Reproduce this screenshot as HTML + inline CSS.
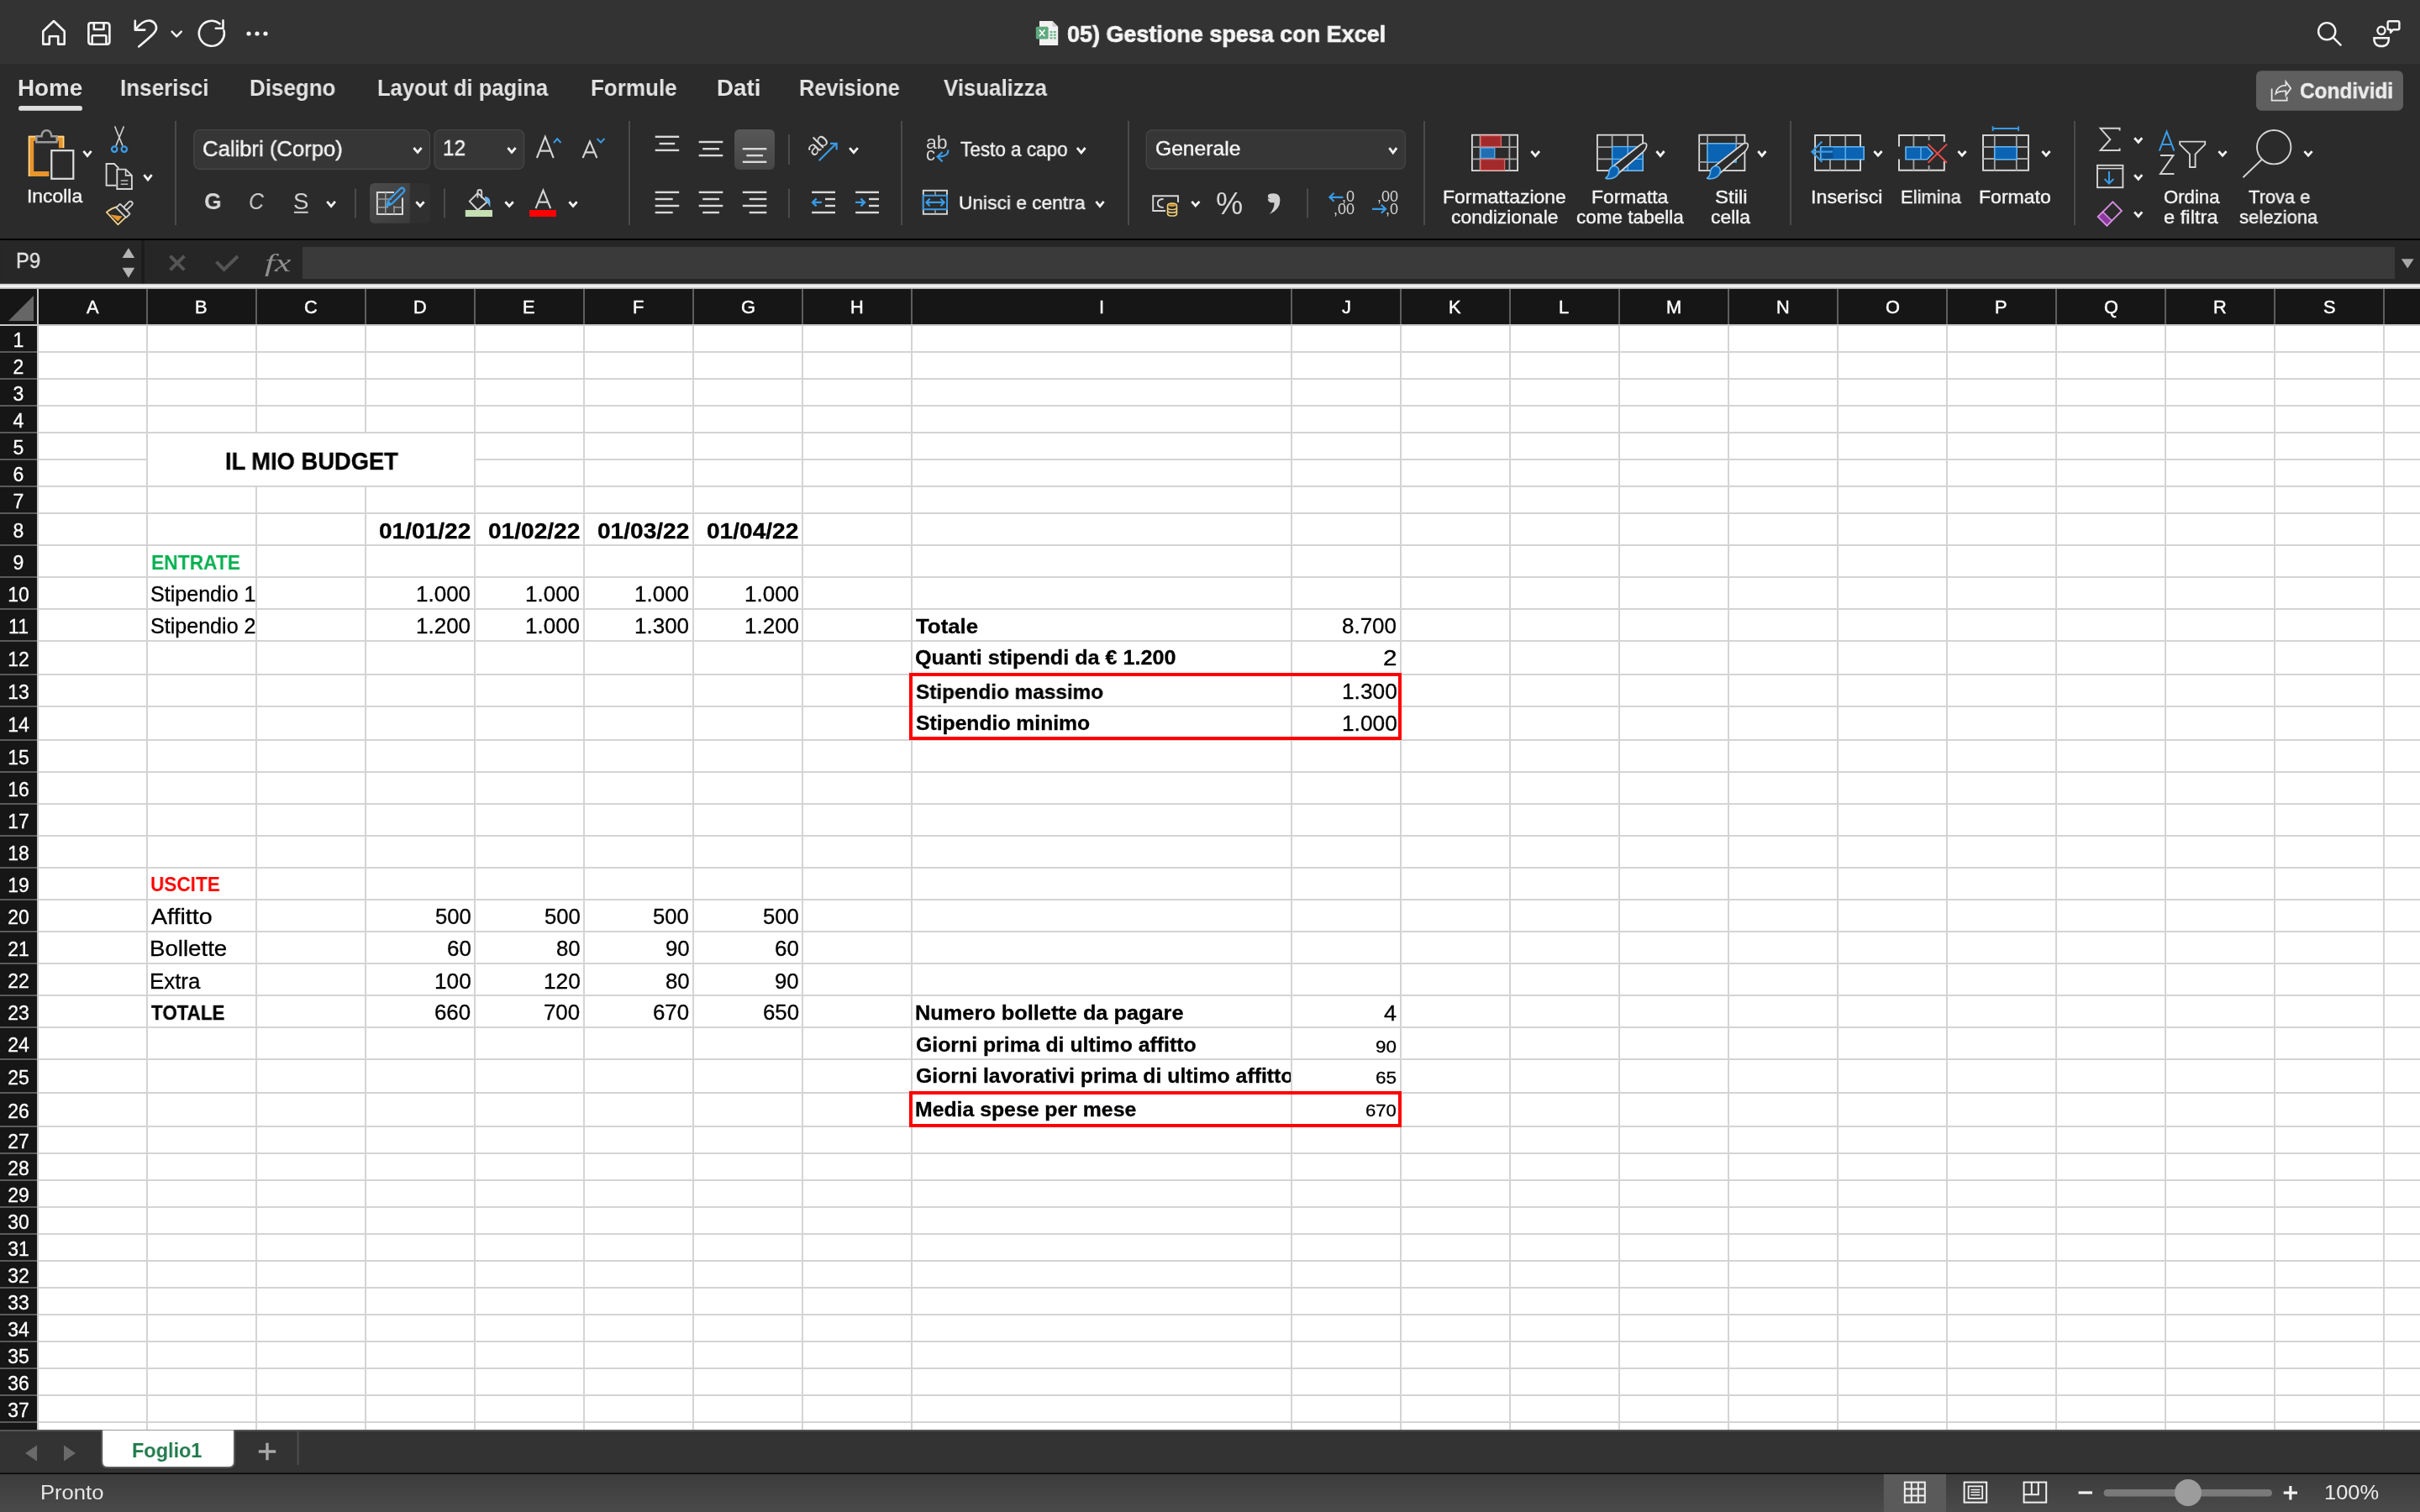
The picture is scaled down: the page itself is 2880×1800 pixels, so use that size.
<!DOCTYPE html>
<html><head><meta charset="utf-8"><style>
html,body{margin:0;padding:0;width:2880px;height:1800px;overflow:hidden;background:#2b2b2b;}
body{position:relative;font-family:"Liberation Sans",sans-serif;}
svg.bg{position:absolute;left:0;top:0;}
.t,.tc{position:absolute;white-space:nowrap;transform-origin:0 0;will-change:transform;}
.tc{-webkit-text-stroke:0.45px #fff;}
.t[style*="color:#f2f2f2;"],.t[style*="color:#f4f4f4;"],.t[style*="color:#e4e4e4;"],.t[style*="color:#e6e6e6;"],.t[style*="color:#ececec;"]{-webkit-text-stroke:0.4px currentColor;}
.t[style*="color:#000;"]{-webkit-text-stroke:0.3px #000;}
.t[style*="color:#f5f5f5;"]{-webkit-text-stroke:0.7px #f5f5f5;}
.rn{position:absolute;will-change:transform;left:0;width:44px;text-align:center;color:#fff;font-size:23px;-webkit-text-stroke:0.3px #fff;font-family:"Liberation Sans",sans-serif;}
</style></head><body>
<svg class="bg" width="2880" height="1800" viewBox="0 0 2880 1800"><rect x="0" y="0" width="2880" height="76" fill="#333333" />
<rect x="0" y="76" width="2880" height="208" fill="#2b2b2b" />
<rect x="0" y="284" width="2880" height="2" fill="#000000" />
<rect x="0" y="286" width="2880" height="52" fill="#262626" />
<rect x="2" y="288" width="166" height="49" fill="#272727" />
<rect x="168" y="286" width="4" height="52" fill="#1d1d1d" />
<defs><linearGradient id="wb" x1="0" y1="0" x2="0" y2="1"><stop offset="0" stop-color="#c4c4c4"/><stop offset="0.5" stop-color="#ffffff"/><stop offset="1" stop-color="#a8a8a8"/></linearGradient></defs>
<rect x="0" y="337.8" width="2880" height="6.2" fill="url(#wb)" />
<rect x="0" y="344" width="2880" height="1358" fill="#ffffff" />
<rect x="0" y="344" width="2880" height="42" fill="#161616" />
<rect x="0" y="344" width="44" height="1358" fill="#161616" />
<rect x="0" y="386" width="2880" height="2" fill="#c8c8c8" />
<rect x="44" y="344" width="2" height="1358" fill="#c8c8c8" />
<polygon points="40,352 40,382 10,382" fill="#666"/>
<rect x="46" y="418" width="2834" height="2" fill="#d4d4d4" />
<rect x="0" y="418" width="44" height="2" fill="#5a5a5a" />
<rect x="46" y="450" width="2834" height="2" fill="#d4d4d4" />
<rect x="0" y="450" width="44" height="2" fill="#5a5a5a" />
<rect x="46" y="482" width="2834" height="2" fill="#d4d4d4" />
<rect x="0" y="482" width="44" height="2" fill="#5a5a5a" />
<rect x="46" y="514" width="2834" height="2" fill="#d4d4d4" />
<rect x="0" y="514" width="44" height="2" fill="#5a5a5a" />
<rect x="46" y="546" width="128" height="2" fill="#d4d4d4" />
<rect x="565" y="546" width="2315" height="2" fill="#d4d4d4" />
<rect x="0" y="546" width="44" height="2" fill="#5a5a5a" />
<rect x="46" y="578" width="2834" height="2" fill="#d4d4d4" />
<rect x="0" y="578" width="44" height="2" fill="#5a5a5a" />
<rect x="46" y="610" width="2834" height="2" fill="#d4d4d4" />
<rect x="0" y="610" width="44" height="2" fill="#5a5a5a" />
<rect x="46" y="648" width="2834" height="2" fill="#d4d4d4" />
<rect x="0" y="648" width="44" height="2" fill="#5a5a5a" />
<rect x="46" y="686" width="2834" height="2" fill="#d4d4d4" />
<rect x="0" y="686" width="44" height="2" fill="#5a5a5a" />
<rect x="46" y="724" width="2834" height="2" fill="#d4d4d4" />
<rect x="0" y="724" width="44" height="2" fill="#5a5a5a" />
<rect x="46" y="762" width="2834" height="2" fill="#d4d4d4" />
<rect x="0" y="762" width="44" height="2" fill="#5a5a5a" />
<rect x="46" y="802" width="2834" height="2" fill="#d4d4d4" />
<rect x="0" y="802" width="44" height="2" fill="#5a5a5a" />
<rect x="46" y="840" width="2834" height="2" fill="#d4d4d4" />
<rect x="0" y="840" width="44" height="2" fill="#5a5a5a" />
<rect x="46" y="880" width="2834" height="2" fill="#d4d4d4" />
<rect x="0" y="880" width="44" height="2" fill="#5a5a5a" />
<rect x="46" y="918" width="2834" height="2" fill="#d4d4d4" />
<rect x="0" y="918" width="44" height="2" fill="#5a5a5a" />
<rect x="46" y="956" width="2834" height="2" fill="#d4d4d4" />
<rect x="0" y="956" width="44" height="2" fill="#5a5a5a" />
<rect x="46" y="994" width="2834" height="2" fill="#d4d4d4" />
<rect x="0" y="994" width="44" height="2" fill="#5a5a5a" />
<rect x="46" y="1032" width="2834" height="2" fill="#d4d4d4" />
<rect x="0" y="1032" width="44" height="2" fill="#5a5a5a" />
<rect x="46" y="1070" width="2834" height="2" fill="#d4d4d4" />
<rect x="0" y="1070" width="44" height="2" fill="#5a5a5a" />
<rect x="46" y="1108" width="2834" height="2" fill="#d4d4d4" />
<rect x="0" y="1108" width="44" height="2" fill="#5a5a5a" />
<rect x="46" y="1146" width="2834" height="2" fill="#d4d4d4" />
<rect x="0" y="1146" width="44" height="2" fill="#5a5a5a" />
<rect x="46" y="1184" width="2834" height="2" fill="#d4d4d4" />
<rect x="0" y="1184" width="44" height="2" fill="#5a5a5a" />
<rect x="46" y="1222" width="2834" height="2" fill="#d4d4d4" />
<rect x="0" y="1222" width="44" height="2" fill="#5a5a5a" />
<rect x="46" y="1260" width="2834" height="2" fill="#d4d4d4" />
<rect x="0" y="1260" width="44" height="2" fill="#5a5a5a" />
<rect x="46" y="1300" width="2834" height="2" fill="#d4d4d4" />
<rect x="0" y="1300" width="44" height="2" fill="#5a5a5a" />
<rect x="46" y="1340" width="2834" height="2" fill="#d4d4d4" />
<rect x="0" y="1340" width="44" height="2" fill="#5a5a5a" />
<rect x="46" y="1372" width="2834" height="2" fill="#d4d4d4" />
<rect x="0" y="1372" width="44" height="2" fill="#5a5a5a" />
<rect x="46" y="1404" width="2834" height="2" fill="#d4d4d4" />
<rect x="0" y="1404" width="44" height="2" fill="#5a5a5a" />
<rect x="46" y="1436" width="2834" height="2" fill="#d4d4d4" />
<rect x="0" y="1436" width="44" height="2" fill="#5a5a5a" />
<rect x="46" y="1468" width="2834" height="2" fill="#d4d4d4" />
<rect x="0" y="1468" width="44" height="2" fill="#5a5a5a" />
<rect x="46" y="1500" width="2834" height="2" fill="#d4d4d4" />
<rect x="0" y="1500" width="44" height="2" fill="#5a5a5a" />
<rect x="46" y="1532" width="2834" height="2" fill="#d4d4d4" />
<rect x="0" y="1532" width="44" height="2" fill="#5a5a5a" />
<rect x="46" y="1564" width="2834" height="2" fill="#d4d4d4" />
<rect x="0" y="1564" width="44" height="2" fill="#5a5a5a" />
<rect x="46" y="1596" width="2834" height="2" fill="#d4d4d4" />
<rect x="0" y="1596" width="44" height="2" fill="#5a5a5a" />
<rect x="46" y="1628" width="2834" height="2" fill="#d4d4d4" />
<rect x="0" y="1628" width="44" height="2" fill="#5a5a5a" />
<rect x="46" y="1660" width="2834" height="2" fill="#d4d4d4" />
<rect x="0" y="1660" width="44" height="2" fill="#5a5a5a" />
<rect x="46" y="1692" width="2834" height="2" fill="#d4d4d4" />
<rect x="0" y="1692" width="44" height="2" fill="#5a5a5a" />
<rect x="174" y="388" width="2" height="1314" fill="#d4d4d4" />
<rect x="174" y="344" width="2" height="42" fill="#5e5e5e" />
<rect x="304" y="388" width="2" height="127" fill="#d4d4d4" />
<rect x="304" y="579" width="2" height="1123" fill="#d4d4d4" />
<rect x="304" y="344" width="2" height="42" fill="#5e5e5e" />
<rect x="434" y="388" width="2" height="127" fill="#d4d4d4" />
<rect x="434" y="579" width="2" height="1123" fill="#d4d4d4" />
<rect x="434" y="344" width="2" height="42" fill="#5e5e5e" />
<rect x="564" y="388" width="2" height="1314" fill="#d4d4d4" />
<rect x="564" y="344" width="2" height="42" fill="#5e5e5e" />
<rect x="694" y="388" width="2" height="1314" fill="#d4d4d4" />
<rect x="694" y="344" width="2" height="42" fill="#5e5e5e" />
<rect x="824" y="388" width="2" height="1314" fill="#d4d4d4" />
<rect x="824" y="344" width="2" height="42" fill="#5e5e5e" />
<rect x="954" y="388" width="2" height="1314" fill="#d4d4d4" />
<rect x="954" y="344" width="2" height="42" fill="#5e5e5e" />
<rect x="1084" y="388" width="2" height="1314" fill="#d4d4d4" />
<rect x="1084" y="344" width="2" height="42" fill="#5e5e5e" />
<rect x="1536" y="388" width="2" height="1314" fill="#d4d4d4" />
<rect x="1536" y="344" width="2" height="42" fill="#5e5e5e" />
<rect x="1666" y="388" width="2" height="1314" fill="#d4d4d4" />
<rect x="1666" y="344" width="2" height="42" fill="#5e5e5e" />
<rect x="1796" y="388" width="2" height="1314" fill="#d4d4d4" />
<rect x="1796" y="344" width="2" height="42" fill="#5e5e5e" />
<rect x="1926" y="388" width="2" height="1314" fill="#d4d4d4" />
<rect x="1926" y="344" width="2" height="42" fill="#5e5e5e" />
<rect x="2056" y="388" width="2" height="1314" fill="#d4d4d4" />
<rect x="2056" y="344" width="2" height="42" fill="#5e5e5e" />
<rect x="2186" y="388" width="2" height="1314" fill="#d4d4d4" />
<rect x="2186" y="344" width="2" height="42" fill="#5e5e5e" />
<rect x="2316" y="388" width="2" height="1314" fill="#d4d4d4" />
<rect x="2316" y="344" width="2" height="42" fill="#5e5e5e" />
<rect x="2446" y="388" width="2" height="1314" fill="#d4d4d4" />
<rect x="2446" y="344" width="2" height="42" fill="#5e5e5e" />
<rect x="2576" y="388" width="2" height="1314" fill="#d4d4d4" />
<rect x="2576" y="344" width="2" height="42" fill="#5e5e5e" />
<rect x="2706" y="388" width="2" height="1314" fill="#d4d4d4" />
<rect x="2706" y="344" width="2" height="42" fill="#5e5e5e" />
<rect x="2836" y="388" width="2" height="1314" fill="#d4d4d4" />
<rect x="2836" y="344" width="2" height="42" fill="#5e5e5e" />
<rect x="1084" y="803" width="582" height="76" fill="none" stroke="#ff0000" stroke-width="4"/>
<rect x="1084" y="1301" width="582" height="39" fill="none" stroke="#ff0000" stroke-width="4"/>
<rect x="0" y="1702" width="2880" height="51" fill="#333333" />
<rect x="0" y="1753.6" width="2880" height="1.6" fill="#050505" />
<defs><linearGradient id="sg" x1="0" y1="0" x2="0" y2="1"><stop offset="0" stop-color="#3c3c3c"/><stop offset="1" stop-color="#4a4a4a"/></linearGradient></defs>
<rect x="0" y="1755" width="2880" height="45" fill="url(#sg)" />
<g fill="none" stroke="#f4f4f4" stroke-width="2.6" stroke-linejoin="round" stroke-linecap="round">
<path d="M51.3,52.6 V37.2 L64,25 L76.7,37.2 V52.6 H69.2 V43.2 H58.8 V52.6 Z"/>
<path d="M108,27.3 H127 Q130.4,27.3 130.4,30.7 V49.6 Q130.4,52.7 127.3,52.7 H108.5 Q105.4,52.7 105.4,49.6 V30.2 Q105.4,27.3 108,27.3 Z"/>
<path d="M111.8,27.3 V35 H123.5 V27.3"/>
<path d="M109.7,52.7 V43.2 Q109.7,42.3 110.6,42.3 H125.5 Q126.4,42.3 126.4,43.2 V52.7"/>
<path d="M160.8,24.8 V35.6 H172.3"/>
<path d="M161.2,35.2 C167,27.8 173,23.6 178.5,24.6 C184,25.6 187.2,30.8 185.6,35.6 C184.6,38.6 181.8,41.6 165.2,55.4"/>
<path d="M204.6,37.6 L210.2,43.4 L215.8,37.6" stroke-width="2.4"/>
<path d="M266.4,36.2 A15,15 0 1 1 261.5,28.3"/>
<path d="M265.5,24.4 V33.8 H256.8"/>
</g>
<g fill="#f4f4f4"><circle cx="296" cy="40" r="2.6"/><circle cx="306" cy="40" r="2.6"/><circle cx="316" cy="40" r="2.6"/></g>
<path d="M1237,25 H1252.5 L1259.2,31.7 V54 H1237 Z" fill="#f2f2f2"/>
<path d="M1252.5,25 V31.7 H1259.2" fill="#cfcfcf"/>
<g fill="#6bb58a"><rect x="1249.5" y="37" width="3" height="2.2"/><rect x="1253.8" y="37" width="3" height="2.2"/><rect x="1249.5" y="40.6" width="3" height="2.2"/><rect x="1253.8" y="40.6" width="3" height="2.2"/><rect x="1249.5" y="44.2" width="3" height="2.2"/><rect x="1253.8" y="44.2" width="3" height="2.2"/></g>
<rect x="1232.8" y="31.8" width="14.8" height="14.8" rx="1.5" fill="#5fa97e"/>
<path d="M1237,35.4 L1243.4,43 M1243.4,35.4 L1237,43" stroke="#fff" stroke-width="1.6"/>
<g fill="none" stroke="#f4f4f4" stroke-width="2.4" stroke-linecap="round">
<circle cx="2769.2" cy="37.2" r="10.1"/><path d="M2776.6,44.6 L2785.6,53.6"/>
<circle cx="2834" cy="36.3" r="4.6"/>
<path d="M2825.4,45.3 H2842.8 Q2843.2,55 2834.1,55 Q2825,55 2825.4,45.3 Z"/>
<path d="M2843.4,25.2 H2853.6 Q2855.4,25.2 2855.4,27 V33.4 Q2855.4,35.2 2853.6,35.2 H2848 L2845,38.8 V35.2 H2843.4 Q2841.6,35.2 2841.6,33.4 V27 Q2841.6,25.2 2843.4,25.2 Z" stroke-linejoin="round"/>
</g>
<rect x="22" y="126" width="76" height="5.8" rx="2.9" fill="#dedede"/>
<rect x="2685" y="84.2" width="175" height="47.5" rx="6.5" fill="#5f5f5f"/>
<g fill="none" stroke="#e6e6e6" stroke-width="1.8" stroke-linejoin="miter">
<path d="M2703.6,105.6 V119.6 H2721.6 V115.2"/>
<path d="M2708.4,111.4 C2709.5,104.5 2714.5,101.6 2720.4,101.6 V97.2 L2726.2,105.2 L2720.4,113.2 V108.4 C2715.2,108.2 2711,109.2 2708.4,111.4 Z"/>
</g>
<polygon points="152.9,295.2 160.2,307 145.6,307" fill="#b4b4b4"/>
<polygon points="145.6,318.8 160.2,318.8 152.9,330.8" fill="#b4b4b4"/>
<path d="M202.5,304.8 L219.4,321.4 M219.4,304.8 L202.5,321.4" stroke="#555555" stroke-width="4" stroke-linecap="butt"/>
<path d="M257.5,311.6 L266.6,321 L283,305" fill="none" stroke="#555555" stroke-width="4"/>
<rect x="360" y="294" width="2490" height="38" fill="#3a3a3a"/>
<polygon points="2857.8,308.2 2872.6,308.2 2865.2,319.4" fill="#a8a8a8"/>
<rect x="208" y="144" width="2" height="124" fill="#4b4b4b" />
<rect x="748" y="144" width="2" height="124" fill="#4b4b4b" />
<rect x="1072" y="144" width="2" height="124" fill="#4b4b4b" />
<rect x="1342" y="144" width="2" height="124" fill="#4b4b4b" />
<rect x="1694" y="144" width="2" height="124" fill="#4b4b4b" />
<rect x="2130" y="144" width="2" height="124" fill="#4b4b4b" />
<rect x="2468" y="144" width="2" height="124" fill="#4b4b4b" />
<rect x="422" y="224.5" width="2" height="35" fill="#4b4b4b" />
<rect x="528" y="224.5" width="2" height="35" fill="#4b4b4b" />
<rect x="938" y="160" width="2" height="36" fill="#4b4b4b" />
<rect x="938" y="224.5" width="2" height="35" fill="#4b4b4b" />
<rect x="1555" y="224.5" width="2" height="35" fill="#4b4b4b" />
<path d="M33.8,161.8 H42.6 V167.8 H40.2 V203.9 H58.4 V210 H33.8 Z" fill="#e8952c"/>
<path d="M68,161.8 H76.3 V176.2 H69.9 V167.8 H68 Z" fill="#e8952c"/>
<path d="M34.6,210 V162.6 H42.6 M69,162.6 H75.5 V176" fill="none" stroke="#fbd98f" stroke-width="1.6"/>
<path d="M43.3,169.2 V162.3 H49.6 Q50,155.3 55.4,155.3 Q60.8,155.3 61.2,162.3 H67.6 V169.2 Z" fill="#2b2b2b" stroke="#9c9c9c" stroke-width="2.4"/>
<rect x="61.3" y="179.2" width="26" height="33.6" fill="#2b2b2b" stroke="#dedede" stroke-width="2.2"/>
<path d="M99.4,179.9 L104.0,185.6 L108.6,179.9" fill="none" stroke="#f4f4f4" stroke-width="2.8" stroke-linecap="butt" stroke-linejoin="miter"/>
<path d="M136.6,150.4 L146,173.6 M147.4,150.4 L138,173.6" fill="none" stroke="#cfcfcf" stroke-width="1.6"/>
<circle cx="136.2" cy="177.6" r="3.2" fill="none" stroke="#3a9be6" stroke-width="2.3"/><circle cx="147.8" cy="177.6" r="3.2" fill="none" stroke="#3a9be6" stroke-width="2.3"/>
<path d="M138.2,220.8 H126.6 V195 H136 L140.6,199.6 V201.5" fill="none" stroke="#d6d6d6" stroke-width="1.9"/>
<path d="M139.3,201.6 H149.6 L156.9,208.9 V225 H139.3 Z" fill="#2b2b2b" stroke="#d6d6d6" stroke-width="1.9"/>
<path d="M149.6,201.6 V208.9 H156.9" fill="none" stroke="#d6d6d6" stroke-width="1.6"/>
<path d="M143.7,215 H152.3 M143.7,219.3 H152.3" stroke="#bdbdbd" stroke-width="1.6"/>
<path d="M171.4,208.1 L176.0,214.0 L180.6,208.1" fill="none" stroke="#f4f4f4" stroke-width="2.8" stroke-linecap="butt" stroke-linejoin="miter"/>
<path d="M126.8,252.6 Q133,247.6 139.6,246.2 L150.8,257.4 L140.4,267.4 Z" fill="#2b2b2b" stroke="#f6d48e" stroke-width="1.7" stroke-linejoin="round"/>
<path d="M131.2,255.6 L145.6,257.4 L140.4,263.6 Z" fill="#e8952c"/>
<g transform="rotate(45 146.6 250.8)"><rect x="138.2" y="247.6" width="16.8" height="6.6" rx="1" fill="#2b2b2b" stroke="#d4d4d4" stroke-width="1.8"/><rect x="144.1" y="236.2" width="5" height="11.6" rx="2.5" fill="#2b2b2b" stroke="#d4d4d4" stroke-width="1.8"/></g>
<rect x="230.8" y="154.6" width="280.6" height="46.6" rx="7" fill="#363636" stroke="#444444" stroke-width="1.4"/>
<rect x="517.2" y="154.6" width="106.4" height="46.6" rx="7" fill="#363636" stroke="#444444" stroke-width="1.4"/>
<path d="M492.4,176.0 L497.0,181.4 L501.6,176.0" fill="none" stroke="#f4f4f4" stroke-width="2.8" stroke-linecap="butt" stroke-linejoin="miter"/>
<path d="M604.4,176.0 L609.0,181.4 L613.6,176.0" fill="none" stroke="#f4f4f4" stroke-width="2.8" stroke-linecap="butt" stroke-linejoin="miter"/>
<path d="M638.9,188 L648.8,162.8 L658.7,188 M642.6,179.6 H655" fill="none" stroke="#d4d4d4" stroke-width="2.1"/>
<path d="M658.9,170 L663.2,165.3 L667.5,170" fill="none" stroke="#3a9be6" stroke-width="2"/>
<path d="M693.6,188 L702,168.4 L710.4,188 M696.8,181.4 H707.2" fill="none" stroke="#d4d4d4" stroke-width="2.1"/>
<path d="M710.6,165 L715,169.6 L719.4,165" fill="none" stroke="#3a9be6" stroke-width="2"/>
<rect x="350" y="251.8" width="16.6" height="2" fill="#d0d0d0" />
<path d="M389.2,239.8 L394.1,245.6 L398.9,239.8" fill="none" stroke="#f4f4f4" stroke-width="2.8" stroke-linecap="butt" stroke-linejoin="miter"/>
<defs><linearGradient id="bb" x1="0" y1="0" x2="1" y2="1"><stop offset="0" stop-color="#4b4b4b"/><stop offset="1" stop-color="#3c3c3c"/></linearGradient></defs>
<path d="M446,218 H506 Q512,218 512,224 V259.8 Q512,265.8 506,265.8 H446 Q440,265.8 440,259.8 V224 Q440,218 446,218 Z" fill="#303030"/>
<path d="M446,218 H487.8 V265.8 H446 Q440,265.8 440,259.8 V224 Q440,218 446,218 Z" fill="url(#bb)"/>
<path d="M469,228.9 H448.9 V255 H479 V235.4" fill="none" stroke="#d8d8d8" stroke-width="2"/>
<path d="M458.8,229 V255 M469,245 V255 M449,237 H466 M449,246.8 H462 M469,246.8 H479" fill="none" stroke="#9a9a9a" stroke-width="1.6"/>
<path d="M460.2,245.6 L462.2,238.8 L476.4,224.6 Q478.4,222.6 480.4,224.6 Q482.4,226.6 480.4,228.6 L466.2,242.8 Z" fill="none" stroke="#3a9be6" stroke-width="2.2" stroke-linejoin="round"/>
<path d="M460.2,245.6 L462.2,238.8 L466.2,242.8 Z" fill="#3a9be6"/>
<path d="M495.4,240.2 L500.0,245.4 L504.6,240.2" fill="none" stroke="#f4f4f4" stroke-width="2.8" stroke-linecap="butt" stroke-linejoin="miter"/>
<path d="M558.8,239.6 L568.6,229.8 L579.6,240.4 L568.6,250 Z" fill="none" stroke="#d4d4d4" stroke-width="2"/>
<path d="M568.4,235.6 V228.4 Q568.4,226 570.8,226 Q573.2,226 573.2,228.4 V236" fill="none" stroke="#d4d4d4" stroke-width="1.8"/>
<path d="M577,234 Q582.8,234.6 583.4,240 V247 Q580.6,242 577,237.6 Z" fill="#6ab3e8"/>
<rect x="553.8" y="250" width="32.2" height="8" fill="#c5dfb3" />
<path d="M601.4,240.2 L606.1,245.4 L610.8,240.2" fill="none" stroke="#f4f4f4" stroke-width="2.8" stroke-linecap="butt" stroke-linejoin="miter"/>
<path d="M637.6,248.2 L646.4,226.6 L655.2,248.2 M640.6,240.6 H652.2" fill="none" stroke="#d4d4d4" stroke-width="2.1"/>
<rect x="630" y="250" width="32" height="8" fill="#ff0000" />
<path d="M677.4,240.2 L682.0,245.4 L686.6,240.2" fill="none" stroke="#f4f4f4" stroke-width="2.8" stroke-linecap="butt" stroke-linejoin="miter"/>
<rect x="779.7" y="161.6" width="28.5" height="2.4" fill="#d9d9d9" />
<rect x="784.6" y="169.8" width="18.6" height="2.4" fill="#d9d9d9" />
<rect x="779.7" y="177.7" width="28.5" height="2.4" fill="#d9d9d9" />
<rect x="831.7" y="167.8" width="28.6" height="2.4" fill="#d9d9d9" />
<rect x="836.2" y="176" width="19.8" height="2.4" fill="#d9d9d9" />
<rect x="831.7" y="183.9" width="28.6" height="2.4" fill="#d9d9d9" />
<defs><linearGradient id="sel" x1="0" y1="0" x2="0" y2="1"><stop offset="0" stop-color="#575757"/><stop offset="1" stop-color="#464646"/></linearGradient></defs>
<rect x="874" y="154" width="48" height="48" rx="6" fill="url(#sel)"/>
<rect x="883.8" y="176" width="28.5" height="2.4" fill="#d9d9d9" />
<rect x="888.3" y="183.9" width="19.7" height="2.4" fill="#d9d9d9" />
<rect x="883.8" y="191.6" width="28.5" height="2.4" fill="#d9d9d9" />
<path d="M974.7,191.2 L995.2,170.8 M988,170.8 H995.6 V178.2" fill="none" stroke="#3a9be6" stroke-width="2.2"/>
<path d="M1011.1,176.1 L1016.0,181.6 L1020.8,176.1" fill="none" stroke="#f4f4f4" stroke-width="2.8" stroke-linecap="butt" stroke-linejoin="miter"/>
<rect x="779.7" y="227.7" width="28.5" height="2.4" fill="#d9d9d9" />
<rect x="779.7" y="235.8" width="21" height="2.4" fill="#d9d9d9" />
<rect x="779.7" y="243.8" width="28.5" height="2.4" fill="#d9d9d9" />
<rect x="779.7" y="251.8" width="21" height="2.4" fill="#d9d9d9" />
<rect x="831.7" y="227.7" width="28.6" height="2.4" fill="#d9d9d9" />
<rect x="836.2" y="235.8" width="19.8" height="2.4" fill="#d9d9d9" />
<rect x="831.7" y="243.8" width="28.6" height="2.4" fill="#d9d9d9" />
<rect x="836.2" y="251.8" width="19.8" height="2.4" fill="#d9d9d9" />
<rect x="883.8" y="227.7" width="28.5" height="2.4" fill="#d9d9d9" />
<rect x="891.7" y="235.8" width="20.6" height="2.4" fill="#d9d9d9" />
<rect x="883.8" y="243.8" width="28.5" height="2.4" fill="#d9d9d9" />
<rect x="891.7" y="251.8" width="20.6" height="2.4" fill="#d9d9d9" />
<rect x="966.1" y="227.7" width="27.9" height="2.4" fill="#d9d9d9" />
<rect x="982" y="235.8" width="12" height="2.4" fill="#d9d9d9" />
<rect x="982" y="243.8" width="12" height="2.4" fill="#d9d9d9" />
<rect x="966.1" y="251.8" width="27.9" height="2.4" fill="#d9d9d9" />
<path d="M977.9,240.9 H967.4 M971.6,236.4 L967,240.9 L971.6,245.4" fill="none" stroke="#3a9be6" stroke-width="2.3"/>
<rect x="1018.1" y="227.7" width="27.9" height="2.4" fill="#d9d9d9" />
<rect x="1034" y="235.8" width="12" height="2.4" fill="#d9d9d9" />
<rect x="1034" y="243.8" width="12" height="2.4" fill="#d9d9d9" />
<rect x="1018.1" y="251.8" width="27.9" height="2.4" fill="#d9d9d9" />
<path d="M1018,240.9 H1028.6 M1024.4,236.4 L1029,240.9 L1024.4,245.4" fill="none" stroke="#3a9be6" stroke-width="2.3"/>
<path d="M1128.2,178.4 Q1129.6,186.2 1116,186.6 M1121.6,181 L1115.6,186.6 L1121.6,192.4" fill="none" stroke="#3a9be6" stroke-width="2.2"/>
<path d="M1281.9,176.0 L1286.8,181.8 L1291.6,176.0" fill="none" stroke="#f4f4f4" stroke-width="2.8" stroke-linecap="butt" stroke-linejoin="miter"/>
<rect x="1098.8" y="226.8" width="28.2" height="28" fill="none" stroke="#d8d8d8" stroke-width="1.9"/>
<path d="M1113,227.5 V232 M1113,249.6 V254.4" stroke="#a0a0a0" stroke-width="1.6"/>
<rect x="1098.8" y="232.8" width="28.2" height="16.4" fill="#2b2b2b" stroke="#3a9be6" stroke-width="2"/>
<path d="M1102.4,240.9 H1123.6 M1106.6,236.6 L1102.4,240.9 L1106.6,245.2 M1119.4,236.6 L1123.6,240.9 L1119.4,245.2" fill="none" stroke="#3a9be6" stroke-width="2.2"/>
<path d="M1304.4,239.9 L1309.0,245.6 L1313.6,239.9" fill="none" stroke="#f4f4f4" stroke-width="2.8" stroke-linecap="butt" stroke-linejoin="miter"/>
<rect x="1364.2" y="155" width="308.2" height="46" rx="7" fill="#363636" stroke="#444444" stroke-width="1.4"/>
<path d="M1653.4,176.1 L1657.8,182.0 L1662.1,176.1" fill="none" stroke="#f4f4f4" stroke-width="2.8" stroke-linecap="butt" stroke-linejoin="miter"/>
<path d="M1387,251 H1372.2 V233.2 H1402 V241" fill="none" stroke="#d6d6d6" stroke-width="1.9"/>
<path d="M1384.6,237 Q1377.8,237 1377.8,242 Q1377.8,247 1384.6,247" fill="none" stroke="#d6d6d6" stroke-width="1.9"/>
<path d="M1389.6,245 Q1389.6,242.2 1395,242.2 Q1400.4,242.2 1400.4,245 V254.4 Q1400.4,257 1395,257 Q1389.6,257 1389.6,254.4 Z" fill="#2b2b2b" stroke="#f0cf7a" stroke-width="1.7"/>
<path d="M1389.6,248.4 Q1395,250.8 1400.4,248.4 M1389.6,252 Q1395,254.4 1400.4,252" fill="none" stroke="#f0cf7a" stroke-width="1.4"/>
<ellipse cx="1395" cy="244.6" rx="4.2" ry="1.3" fill="#e09a2a"/>
<path d="M1418.3,239.9 L1422.8,245.0 L1427.4,239.9" fill="none" stroke="#f4f4f4" stroke-width="2.8" stroke-linecap="butt" stroke-linejoin="miter"/>
<path d="M1512.6,236.6 Q1508.8,236.6 1508.8,233.6 Q1508.8,230.2 1515.6,230.2 Q1523.4,230.2 1523.4,238.4 Q1523.4,249.2 1510.6,255 Q1517,248.4 1516.4,241 Q1514.6,241.6 1512.6,241.2 Q1508.8,240.4 1508.8,236.6 Z" fill="#d0d0d0"/>
<path d="M1598.4,234.8 H1582.4 M1587.6,229.8 L1582.4,234.8 L1587.6,239.8" fill="none" stroke="#3a9be6" stroke-width="2.2"/>
<path d="M1633,248.8 H1649 M1643.8,243.8 L1649,248.8 L1643.8,253.8" fill="none" stroke="#3a9be6" stroke-width="2.2"/>
<rect x="1751.9" y="160.7" width="54.2" height="42.4" fill="none" stroke="#dcdcdc" stroke-width="1.8"/>
<path d="M1752,175.1 H1806 M1752,189.3 H1806 M1761.6,161 V203 M1796.4,161 V203" stroke="#a8a8a8" stroke-width="1.8"/>
<rect x="1762" y="161.6" width="24.4" height="13" fill="#a32a2a" stroke="#e06565" stroke-width="1.3"/>
<rect x="1762" y="176" width="16.8" height="12.4" fill="#1f6fb2" stroke="#5ab0e8" stroke-width="1.3"/>
<rect x="1762" y="189.6" width="28.6" height="13" fill="#a32a2a" stroke="#e06565" stroke-width="1.3"/>
<path d="M1822.4,180.0 L1827.2,185.6 L1832.0,180.0" fill="none" stroke="#f4f4f4" stroke-width="2.8" stroke-linecap="butt" stroke-linejoin="miter"/>
<rect x="1900.9" y="160.7" width="54.2" height="42.4" fill="none" stroke="#dcdcdc" stroke-width="1.8"/>
<path d="M1901,175.1 H1918 M1901,189.3 H1918 M1918.6,161 V175 M1937.2,161 V175" stroke="#a8a8a8" stroke-width="1.8"/>
<rect x="1918.6" y="174.6" width="36.5" height="28.5" fill="#0b63b3" stroke="#63b5ee" stroke-width="1.4"/>
<path d="M1918.6,189.3 H1955 M1937.2,175 V203" stroke="#63b5ee" stroke-width="1.3"/>
<g transform="translate(0,0)">
<path d="M1917.6,199.6 L1952.6,172 Q1958.8,168.6 1959.6,172.4 Q1960,176 1955.6,180.6 L1925.6,206.8 Z" fill="#2b2b2b" stroke="#d8d8d8" stroke-width="1.8" stroke-linejoin="round"/>
<path d="M1914.6,212.8 Q1921.6,212.4 1925,208.2 Q1928.4,202.8 1925,199.2 Q1921,196.2 1917.2,199.4 Q1914.6,202 1914.6,206.6 Q1914,210 1911,212 Q1912.6,213.2 1914.6,212.8 Z" fill="#0b63b3" stroke="#63b5ee" stroke-width="1.6"/>
</g>
<path d="M1971.4,180.0 L1976.0,185.6 L1980.6,180.0" fill="none" stroke="#f4f4f4" stroke-width="2.8" stroke-linecap="butt" stroke-linejoin="miter"/>
<rect x="2022.2" y="160.7" width="54.2" height="42.4" fill="none" stroke="#dcdcdc" stroke-width="1.8"/>
<path d="M2022,171 H2076 M2022,192.9 H2040 M2032,161 V203 M2066.4,161 V172" stroke="#a8a8a8" stroke-width="1.8"/>
<rect x="2031.9" y="170.9" width="34.2" height="22.2" fill="#0b63b3" stroke="#63b5ee" stroke-width="1.4"/>
<g transform="translate(120.7,0)">
<path d="M1917.6,199.6 L1952.6,172 Q1958.8,168.6 1959.6,172.4 Q1960,176 1955.6,180.6 L1925.6,206.8 Z" fill="#2b2b2b" stroke="#d8d8d8" stroke-width="1.8" stroke-linejoin="round"/>
<path d="M1914.6,212.8 Q1921.6,212.4 1925,208.2 Q1928.4,202.8 1925,199.2 Q1921,196.2 1917.2,199.4 Q1914.6,202 1914.6,206.6 Q1914,210 1911,212 Q1912.6,213.2 1914.6,212.8 Z" fill="#0b63b3" stroke="#63b5ee" stroke-width="1.6"/>
</g>
<path d="M2092.3,180.0 L2096.9,185.6 L2101.4,180.0" fill="none" stroke="#f4f4f4" stroke-width="2.8" stroke-linecap="butt" stroke-linejoin="miter"/>
<rect x="2160.1" y="161" width="53.9" height="41.8" fill="none" stroke="#dcdcdc" stroke-width="1.9"/>
<path d="M2178,161 V203 M2196.2,161 V203" stroke="#a8a8a8" stroke-width="1.8"/>
<rect x="2166.6" y="174.8" width="51.6" height="15" fill="#0b63b3" stroke="#63b5ee" stroke-width="1.6"/>
<path d="M2196.2,175 V190" stroke="#63b5ee" stroke-width="1.4"/>
<path d="M2169,175.6 H2181.6 V189 H2169 Z" fill="#0b4f90"/>
<path d="M2181,180.7 H2157 M2168.4,168.6 L2156.4,180.7 L2168.4,192.8" fill="none" stroke="#3a9be6" stroke-width="2.2"/>
<path d="M2230.4,180.0 L2235.0,185.1 L2239.6,180.0" fill="none" stroke="#f4f4f4" stroke-width="2.8" stroke-linecap="butt" stroke-linejoin="miter"/>
<path d="M2260,174.5 V161 H2313.8 V169 M2313.8,192 V202.8 H2260 V189.5" fill="none" stroke="#dcdcdc" stroke-width="1.9"/>
<path d="M2277.4,161 V175 M2277.4,190 V203 M2295.6,161 V167 M2295.6,197 V203" stroke="#a8a8a8" stroke-width="1.8"/>
<path d="M2268,175 H2293.4 L2300.2,182.4 L2293.4,189.8 H2268 Z" fill="#0b63b3" stroke="#63b5ee" stroke-width="1.6"/>
<path d="M2286,175 V190" stroke="#63b5ee" stroke-width="1.4"/>
<path d="M2294.6,171.6 L2317,193.8 M2317,171.6 L2294.6,193.8" stroke="#e84a4a" stroke-width="2"/>
<path d="M2330.4,180.0 L2335.0,185.1 L2339.6,180.0" fill="none" stroke="#f4f4f4" stroke-width="2.8" stroke-linecap="butt" stroke-linejoin="miter"/>
<rect x="2360" y="161" width="54" height="41.8" fill="none" stroke="#dcdcdc" stroke-width="1.9"/>
<path d="M2373.8,161 V203 M2399.8,161 V203 M2360,175 H2414 M2360,189 H2414" stroke="#a8a8a8" stroke-width="1.8"/>
<rect x="2373.8" y="174.8" width="26.4" height="15" fill="#0b63b3" stroke="#63b5ee" stroke-width="1.6"/>
<path d="M2371.6,153 H2402.2 M2371.6,150.2 V156 M2402.2,150.2 V156" fill="none" stroke="#3a9be6" stroke-width="1.8"/>
<path d="M2430.4,180.0 L2435.0,185.1 L2439.6,180.0" fill="none" stroke="#f4f4f4" stroke-width="2.8" stroke-linecap="butt" stroke-linejoin="miter"/>
<path d="M2522.6,155.4 V152.8 H2499.6 L2511.4,166 L2499.6,179 H2522.6 V176.4" fill="none" stroke="#d4d4d4" stroke-width="1.9"/>
<path d="M2540.2,164.2 L2544.8,169.3 L2549.3,164.2" fill="none" stroke="#f4f4f4" stroke-width="2.8" stroke-linecap="butt" stroke-linejoin="miter"/>
<rect x="2496" y="196.8" width="30.4" height="26.4" fill="none" stroke="#d4d4d4" stroke-width="1.9"/>
<path d="M2496,200.6 H2526.4" stroke="#d4d4d4" stroke-width="1.5"/>
<path d="M2510,204 V218.4 M2504.6,213 L2510,218.6 L2515.4,213" fill="none" stroke="#3a9be6" stroke-width="2"/>
<path d="M2540.2,208.2 L2544.8,213.4 L2549.3,208.2" fill="none" stroke="#f4f4f4" stroke-width="2.8" stroke-linecap="butt" stroke-linejoin="miter"/>
<path d="M2496.8,258 L2514.4,240.4 L2525,251 L2507.4,268.6 Z" fill="none" stroke="#d68ee0" stroke-width="1.9"/>
<path d="M2496.8,258 L2502.6,252.2 L2513.2,262.8 L2507.4,268.6 Z" fill="#8c3aa0" stroke="#d68ee0" stroke-width="1.6"/>
<path d="M2540.2,252.4 L2544.8,257.6 L2549.3,252.4" fill="none" stroke="#f4f4f4" stroke-width="2.8" stroke-linecap="butt" stroke-linejoin="miter"/>
<path d="M2569.8,179.6 L2578.6,156.6 L2587.4,179.6 M2572.8,172 H2584.4" fill="none" stroke="#3a9be6" stroke-width="2"/>
<path d="M2571,185 H2586.4 L2571,207 H2587.4" fill="none" stroke="#d4d4d4" stroke-width="2"/>
<path d="M2594.2,168.6 H2624.2 V171.8 L2612.6,183.6 V199 H2606 V183.6 L2594.2,171.8 Z" fill="none" stroke="#d4d4d4" stroke-width="1.9"/>
<path d="M2640.4,180.1 L2645.0,185.2 L2649.6,180.1" fill="none" stroke="#f4f4f4" stroke-width="2.8" stroke-linecap="butt" stroke-linejoin="miter"/>
<circle cx="2706.2" cy="175.2" r="20.2" fill="none" stroke="#d4d4d4" stroke-width="1.9"/>
<path d="M2691.6,190 L2669.4,211.2" stroke="#d4d4d4" stroke-width="1.9"/>
<path d="M2742.4,180.1 L2747.0,185.2 L2751.6,180.1" fill="none" stroke="#f4f4f4" stroke-width="2.8" stroke-linecap="butt" stroke-linejoin="miter"/>
<polygon points="44,1720.6 44,1739.6 30,1730.1" fill="#6a6a6a"/>
<polygon points="76,1720.6 76,1739.6 90,1730.1" fill="#6a6a6a"/>
<rect x="0" y="1702" width="122" height="2" fill="#555555" />
<rect x="278" y="1702" width="2602" height="2" fill="#555555" />
<path d="M121.2,1702.5 V1740 Q121.2,1747 128.2,1747 H272 Q279,1747 279,1740 V1702.5" fill="#ffffff" stroke="#5a5a5a" stroke-width="2"/>
<path d="M307.8,1728 H328.2 M318,1717.8 V1738.2" stroke="#a8a8a8" stroke-width="3.4"/>
<rect x="353.6" y="1704" width="2" height="40" fill="#4e4e4e" />
<rect x="2241.8" y="1755" width="74.2" height="45" fill="#5a5a5a" />
<g fill="none" stroke="#f0f0f0" stroke-width="2">
<rect x="2266.8" y="1764.6" width="24" height="24"/>
<path d="M2274.8,1764.6 V1788.6 M2282.8,1764.6 V1788.6 M2266.8,1772.6 H2290.8 M2266.8,1780.6 H2290.8"/>
<rect x="2337.6" y="1764.6" width="26.6" height="24"/>
<path d="M2342.6,1769.4 H2359.2 V1783.8 H2342.6 Z" stroke-width="1.8"/>
<path d="M2345.4,1773.4 H2356.4 M2345.4,1776.6 H2356.4 M2345.4,1779.8 H2356.4" stroke-width="1.5"/>
<rect x="2408.6" y="1764.6" width="26.6" height="24"/>
<path d="M2408.6,1779.2 H2425.8 V1764.6 M2417.8,1764.6 V1779.2" stroke-width="2"/>
</g>
<rect x="2473.6" y="1775.4" width="16.4" height="3.2" fill="#f2f2f2" />
<rect x="2503.6" y="1773" width="200.4" height="8.4" rx="4.2" fill="#7a7a7a"/>
<circle cx="2604" cy="1777" r="16" fill="#9c9c9c"/>
<path d="M2717.7,1777.2 H2734 M2725.85,1769 V1785.4" stroke="#f2f2f2" stroke-width="3.2"/></svg>
<div class="tc" style="left:102.70px;top:355.47px;font-size:21.80px;line-height:21.80px;color:#ffffff;">A</div>
<div class="tc" style="left:232.42px;top:355.47px;font-size:21.80px;line-height:21.80px;color:#ffffff;">B</div>
<div class="tc" style="left:362.04px;top:355.47px;font-size:21.80px;line-height:21.80px;color:#ffffff;">C</div>
<div class="tc" style="left:491.77px;top:355.47px;font-size:21.80px;line-height:21.80px;color:#ffffff;">D</div>
<div class="tc" style="left:622.31px;top:355.47px;font-size:21.80px;line-height:21.80px;color:#ffffff;">E</div>
<div class="tc" style="left:752.91px;top:355.47px;font-size:21.80px;line-height:21.80px;color:#ffffff;">F</div>
<div class="tc" style="left:881.77px;top:355.47px;font-size:21.80px;line-height:21.80px;color:#ffffff;">G</div>
<div class="tc" style="left:1012.15px;top:355.47px;font-size:21.80px;line-height:21.80px;color:#ffffff;">H</div>
<div class="tc" style="left:1308.00px;top:355.47px;font-size:21.80px;line-height:21.80px;color:#ffffff;">I</div>
<div class="tc" style="left:1597.20px;top:355.47px;font-size:21.80px;line-height:21.80px;color:#ffffff;">J</div>
<div class="tc" style="left:1723.99px;top:355.47px;font-size:21.80px;line-height:21.80px;color:#ffffff;">K</div>
<div class="tc" style="left:1855.40px;top:355.47px;font-size:21.80px;line-height:21.80px;color:#ffffff;">L</div>
<div class="tc" style="left:1982.95px;top:355.47px;font-size:21.80px;line-height:21.80px;color:#ffffff;">M</div>
<div class="tc" style="left:2114.15px;top:355.47px;font-size:21.80px;line-height:21.80px;color:#ffffff;">N</div>
<div class="tc" style="left:2243.55px;top:355.47px;font-size:21.80px;line-height:21.80px;color:#ffffff;">O</div>
<div class="tc" style="left:2374.42px;top:355.47px;font-size:21.80px;line-height:21.80px;color:#ffffff;">P</div>
<div class="tc" style="left:2503.55px;top:355.47px;font-size:21.80px;line-height:21.80px;color:#ffffff;">Q</div>
<div class="tc" style="left:2633.77px;top:355.47px;font-size:21.80px;line-height:21.80px;color:#ffffff;">R</div>
<div class="tc" style="left:2764.75px;top:355.47px;font-size:21.80px;line-height:21.80px;color:#ffffff;">S</div>
<div class="rn" style="top:388px;height:30px;line-height:34px">1</div>
<div class="rn" style="top:420px;height:30px;line-height:34px">2</div>
<div class="rn" style="top:452px;height:30px;line-height:34px">3</div>
<div class="rn" style="top:484px;height:30px;line-height:34px">4</div>
<div class="rn" style="top:516px;height:30px;line-height:34px">5</div>
<div class="rn" style="top:548px;height:30px;line-height:34px">6</div>
<div class="rn" style="top:580px;height:30px;line-height:34px">7</div>
<div class="rn" style="top:612px;height:36px;line-height:40px">8</div>
<div class="rn" style="top:650px;height:36px;line-height:40px">9</div>
<div class="rn" style="top:688px;height:36px;line-height:40px">10</div>
<div class="rn" style="top:726px;height:36px;line-height:40px">11</div>
<div class="rn" style="top:764px;height:38px;line-height:42px">12</div>
<div class="rn" style="top:804px;height:36px;line-height:40px">13</div>
<div class="rn" style="top:842px;height:38px;line-height:42px">14</div>
<div class="rn" style="top:882px;height:36px;line-height:40px">15</div>
<div class="rn" style="top:920px;height:36px;line-height:40px">16</div>
<div class="rn" style="top:958px;height:36px;line-height:40px">17</div>
<div class="rn" style="top:996px;height:36px;line-height:40px">18</div>
<div class="rn" style="top:1034px;height:36px;line-height:40px">19</div>
<div class="rn" style="top:1072px;height:36px;line-height:40px">20</div>
<div class="rn" style="top:1110px;height:36px;line-height:40px">21</div>
<div class="rn" style="top:1148px;height:36px;line-height:40px">22</div>
<div class="rn" style="top:1186px;height:36px;line-height:40px">23</div>
<div class="rn" style="top:1224px;height:36px;line-height:40px">24</div>
<div class="rn" style="top:1262px;height:38px;line-height:42px">25</div>
<div class="rn" style="top:1302px;height:38px;line-height:42px">26</div>
<div class="rn" style="top:1342px;height:30px;line-height:34px">27</div>
<div class="rn" style="top:1374px;height:30px;line-height:34px">28</div>
<div class="rn" style="top:1406px;height:30px;line-height:34px">29</div>
<div class="rn" style="top:1438px;height:30px;line-height:34px">30</div>
<div class="rn" style="top:1470px;height:30px;line-height:34px">31</div>
<div class="rn" style="top:1502px;height:30px;line-height:34px">32</div>
<div class="rn" style="top:1534px;height:30px;line-height:34px">33</div>
<div class="rn" style="top:1566px;height:30px;line-height:34px">34</div>
<div class="rn" style="top:1598px;height:30px;line-height:34px">35</div>
<div class="rn" style="top:1630px;height:30px;line-height:34px">36</div>
<div class="rn" style="top:1662px;height:30px;line-height:34px">37</div>
<div class="t" style="left:268.02px;top:534.69px;font-size:28.60px;line-height:28.60px;color:#000;font-weight:bold;transform:scaleX(0.9551);">IL MIO BUDGET</div>
<div class="t" style="left:451.18px;top:619.57px;font-size:24.98px;line-height:24.98px;color:#000;font-weight:bold;transform:scaleX(1.1244);">01/01/22</div>
<div class="t" style="left:581.18px;top:619.57px;font-size:24.98px;line-height:24.98px;color:#000;font-weight:bold;transform:scaleX(1.1244);">01/02/22</div>
<div class="t" style="left:710.98px;top:619.57px;font-size:24.98px;line-height:24.98px;color:#000;font-weight:bold;transform:scaleX(1.1244);">01/03/22</div>
<div class="t" style="left:841.48px;top:619.57px;font-size:24.98px;line-height:24.98px;color:#000;font-weight:bold;transform:scaleX(1.1244);">01/04/22</div>
<div class="t" style="left:179.72px;top:657.69px;font-size:24.84px;line-height:24.84px;color:#00b050;font-weight:bold;transform:scaleX(0.9186);">ENTRATE</div>
<div class="t" style="left:179.07px;top:694.98px;font-size:25.08px;line-height:25.08px;color:#000;transform:scaleX(0.9971);">Stipendio 1</div>
<div class="t" style="left:179.07px;top:732.98px;font-size:25.08px;line-height:25.08px;color:#000;transform:scaleX(0.9971);">Stipendio 2</div>
<div class="t" style="left:495.35px;top:694.98px;font-size:25.08px;line-height:25.08px;color:#000;transform:scaleX(1.0364);">1.000</div>
<div class="t" style="left:625.35px;top:694.98px;font-size:25.08px;line-height:25.08px;color:#000;transform:scaleX(1.0364);">1.000</div>
<div class="t" style="left:755.15px;top:694.98px;font-size:25.08px;line-height:25.08px;color:#000;transform:scaleX(1.0364);">1.000</div>
<div class="t" style="left:885.65px;top:694.98px;font-size:25.08px;line-height:25.08px;color:#000;transform:scaleX(1.0364);">1.000</div>
<div class="t" style="left:495.35px;top:732.98px;font-size:25.08px;line-height:25.08px;color:#000;transform:scaleX(1.0364);">1.200</div>
<div class="t" style="left:625.35px;top:732.98px;font-size:25.08px;line-height:25.08px;color:#000;transform:scaleX(1.0364);">1.000</div>
<div class="t" style="left:755.15px;top:732.98px;font-size:25.08px;line-height:25.08px;color:#000;transform:scaleX(1.0364);">1.300</div>
<div class="t" style="left:885.65px;top:732.98px;font-size:25.08px;line-height:25.08px;color:#000;transform:scaleX(1.0364);">1.200</div>
<div class="t" style="left:178.94px;top:1041.31px;font-size:24.70px;line-height:24.70px;color:#ff0000;font-weight:bold;transform:scaleX(0.9153);">USCITE</div>
<div class="t" style="left:180.16px;top:1079.28px;font-size:25.08px;line-height:25.08px;color:#000;transform:scaleX(1.1400);">Affitto</div>
<div class="t" style="left:178.09px;top:1117.28px;font-size:25.08px;line-height:25.08px;color:#000;transform:scaleX(1.1029);">Bollette</div>
<div class="t" style="left:178.23px;top:1155.58px;font-size:25.08px;line-height:25.08px;color:#000;transform:scaleX(1.0307);">Extra</div>
<div class="t" style="left:180.08px;top:1193.81px;font-size:24.70px;line-height:24.70px;color:#000;font-weight:bold;transform:scaleX(0.9063);">TOTALE</div>
<div class="t" style="left:517.57px;top:1079.28px;font-size:25.08px;line-height:25.08px;color:#000;transform:scaleX(1.0237);">500</div>
<div class="t" style="left:647.57px;top:1079.28px;font-size:25.08px;line-height:25.08px;color:#000;transform:scaleX(1.0237);">500</div>
<div class="t" style="left:777.37px;top:1079.28px;font-size:25.08px;line-height:25.08px;color:#000;transform:scaleX(1.0237);">500</div>
<div class="t" style="left:907.87px;top:1079.28px;font-size:25.08px;line-height:25.08px;color:#000;transform:scaleX(1.0237);">500</div>
<div class="t" style="left:531.61px;top:1117.28px;font-size:25.08px;line-height:25.08px;color:#000;transform:scaleX(1.0318);">60</div>
<div class="t" style="left:661.74px;top:1117.28px;font-size:25.08px;line-height:25.08px;color:#000;transform:scaleX(1.0268);">80</div>
<div class="t" style="left:791.54px;top:1117.28px;font-size:25.08px;line-height:25.08px;color:#000;transform:scaleX(1.0268);">90</div>
<div class="t" style="left:921.91px;top:1117.28px;font-size:25.08px;line-height:25.08px;color:#000;transform:scaleX(1.0318);">60</div>
<div class="t" style="left:516.63px;top:1155.58px;font-size:25.08px;line-height:25.08px;color:#000;transform:scaleX(1.0468);">100</div>
<div class="t" style="left:646.63px;top:1155.58px;font-size:25.08px;line-height:25.08px;color:#000;transform:scaleX(1.0468);">120</div>
<div class="t" style="left:791.54px;top:1155.58px;font-size:25.08px;line-height:25.08px;color:#000;transform:scaleX(1.0268);">80</div>
<div class="t" style="left:922.04px;top:1155.58px;font-size:25.08px;line-height:25.08px;color:#000;transform:scaleX(1.0268);">90</div>
<div class="t" style="left:517.31px;top:1193.48px;font-size:25.08px;line-height:25.08px;color:#000;transform:scaleX(1.0302);">660</div>
<div class="t" style="left:647.31px;top:1193.48px;font-size:25.08px;line-height:25.08px;color:#000;transform:scaleX(1.0302);">700</div>
<div class="t" style="left:777.11px;top:1193.48px;font-size:25.08px;line-height:25.08px;color:#000;transform:scaleX(1.0302);">670</div>
<div class="t" style="left:907.61px;top:1193.48px;font-size:25.08px;line-height:25.08px;color:#000;transform:scaleX(1.0302);">650</div>
<div class="t" style="left:1090.24px;top:733.81px;font-size:24.70px;line-height:24.70px;color:#000;font-weight:bold;transform:scaleX(1.0463);">Totale</div>
<div class="t" style="left:1597.43px;top:733.48px;font-size:25.08px;line-height:25.08px;color:#000;transform:scaleX(1.0350);">8.700</div>
<div class="t" style="left:1089.49px;top:771.21px;font-size:24.70px;line-height:24.70px;color:#000;font-weight:bold;transform:scaleX(1.0193);">Quanti stipendi da € 1.200</div>
<div class="t" style="left:1646.32px;top:770.88px;font-size:25.08px;line-height:25.08px;color:#000;transform:scaleX(1.1829);">2</div>
<div class="t" style="left:1089.77px;top:811.51px;font-size:24.70px;line-height:24.70px;color:#000;font-weight:bold;transform:scaleX(0.9855);">Stipendio massimo</div>
<div class="t" style="left:1596.63px;top:811.18px;font-size:25.08px;line-height:25.08px;color:#000;transform:scaleX(1.0481);">1.300</div>
<div class="t" style="left:1089.76px;top:849.11px;font-size:24.70px;line-height:24.70px;color:#000;font-weight:bold;">Stipendio minimo</div>
<div class="t" style="left:1596.63px;top:848.78px;font-size:25.08px;line-height:25.08px;color:#000;transform:scaleX(1.0481);">1.000</div>
<div class="t" style="left:1088.85px;top:1194.11px;font-size:24.70px;line-height:24.70px;color:#000;font-weight:bold;transform:scaleX(1.0262);">Numero bollette da pagare</div>
<div class="t" style="left:1647.12px;top:1193.78px;font-size:25.08px;line-height:25.08px;color:#000;transform:scaleX(1.0764);">4</div>
<div class="t" style="left:1089.51px;top:1232.01px;font-size:24.70px;line-height:24.70px;color:#000;font-weight:bold;transform:scaleX(1.0052);">Giorni prima di ultimo affitto</div>
<div class="t" style="left:1637.29px;top:1235.53px;font-size:20.55px;line-height:20.55px;color:#000;transform:scaleX(1.0920);">90</div>
<div style="position:absolute;left:1086px;top:1262px;width:450px;height:38px;overflow:hidden">
<div class="t" style="left:3.51px;top:7.41px;font-size:24.70px;line-height:24.70px;color:#000;font-weight:bold;transform:scaleX(1.0052);">Giorni lavorativi prima di ultimo affitto</div>
</div>
<div class="t" style="left:1637.17px;top:1272.93px;font-size:20.55px;line-height:20.55px;color:#000;transform:scaleX(1.0973);">65</div>
<div class="t" style="left:1088.89px;top:1308.91px;font-size:24.70px;line-height:24.70px;color:#000;font-weight:bold;transform:scaleX(1.0043);">Media spese per mese</div>
<div class="t" style="left:1625.40px;top:1312.43px;font-size:20.55px;line-height:20.55px;color:#000;transform:scaleX(1.0753);">670</div>
<div class="t" style="left:1269.92px;top:25.51px;font-size:28.34px;line-height:28.34px;color:#f5f5f5;font-weight:bold;transform:scaleX(0.9517);">05) Gestione spesa con Excel</div>
<div class="t" style="left:21.19px;top:90.73px;font-size:27.62px;line-height:27.62px;color:#e3e3e3;font-weight:bold;transform:scaleX(1.0071);">Home</div>
<div class="t" style="left:143.31px;top:90.73px;font-size:27.62px;line-height:27.62px;color:#e3e3e3;font-weight:bold;transform:scaleX(0.9422);">Inserisci</div>
<div class="t" style="left:297.31px;top:90.73px;font-size:27.62px;line-height:27.62px;color:#e3e3e3;font-weight:bold;transform:scaleX(0.9402);">Disegno</div>
<div class="t" style="left:449.34px;top:90.73px;font-size:27.62px;line-height:27.62px;color:#e3e3e3;font-weight:bold;transform:scaleX(0.9257);">Layout di pagina</div>
<div class="t" style="left:703.01px;top:90.73px;font-size:27.62px;line-height:27.62px;color:#e3e3e3;font-weight:bold;transform:scaleX(0.9418);">Formule</div>
<div class="t" style="left:852.70px;top:90.73px;font-size:27.62px;line-height:27.62px;color:#e3e3e3;font-weight:bold;transform:scaleX(1.0035);">Dati</div>
<div class="t" style="left:951.05px;top:90.73px;font-size:27.62px;line-height:27.62px;color:#e3e3e3;font-weight:bold;transform:scaleX(0.9184);">Revisione</div>
<div class="t" style="left:1122.74px;top:90.73px;font-size:27.62px;line-height:27.62px;color:#e3e3e3;font-weight:bold;transform:scaleX(0.9357);">Visualizza</div>
<div class="t" style="left:2737.02px;top:95.83px;font-size:25.73px;line-height:25.73px;color:#ececec;font-weight:bold;transform:scaleX(0.9481);">Condividi</div>
<div class="t" style="left:19.10px;top:297.83px;font-size:25.73px;line-height:25.73px;color:#e4e4e4;transform:scaleX(0.9229);">P9</div>
<div class="t" style="left:314.57px;top:297.50px;font-size:30.00px;line-height:30.00px;color:#8e8e8e;font-family:'Liberation Serif',serif;font-style:italic;transform:scaleX(1.4421);">fx</div>
<div class="t" style="left:32.44px;top:222.77px;font-size:22.38px;line-height:22.38px;color:#f2f2f2;transform:scaleX(1.0227);">Incolla</div>
<div class="t" style="left:241.02px;top:164.06px;font-size:26.16px;line-height:26.16px;color:#f4f4f4;transform:scaleX(0.9810);">Calibri (Corpo)</div>
<div class="t" style="left:526.78px;top:164.45px;font-size:25.00px;line-height:25.00px;color:#f4f4f4;transform:scaleX(0.9706);">12</div>
<div class="t" style="left:243.44px;top:226.13px;font-size:27.62px;line-height:27.62px;color:#d6d6d6;font-weight:bold;transform:scaleX(0.9602);">G</div>
<div class="t" style="left:295.63px;top:226.13px;font-size:27.62px;line-height:27.62px;color:#d0d0d0;font-style:italic;transform:scaleX(0.9026);">C</div>
<div class="t" style="left:349.29px;top:226.13px;font-size:27.62px;line-height:27.62px;color:#d0d0d0;transform:scaleX(0.9761);">S</div>
<div class="t" style="left:962px;top:161px;width:28px;height:28px;"><div style="position:absolute;left:-3px;top:-1px;font-size:24px;line-height:24px;color:#d6d6d6;transform:rotate(-45deg);transform-origin:50%% 50%%;white-space:nowrap">ab</div></div>
<div class="t" style="left:1101.66px;top:159.20px;font-size:22.00px;line-height:22.00px;color:#d6d6d6;transform:scaleX(1.0466);">ab</div>
<div class="t" style="left:1101.72px;top:173.30px;font-size:22.00px;line-height:22.00px;color:#d6d6d6;transform:scaleX(0.9937);">c</div>
<div class="t" style="left:1142.55px;top:166.14px;font-size:23.84px;line-height:23.84px;color:#f2f2f2;transform:scaleX(0.9452);">Testo a capo</div>
<div class="t" style="left:1141.29px;top:230.28px;font-size:22.97px;line-height:22.97px;color:#f2f2f2;transform:scaleX(0.9901);">Unisci e centra</div>
<div class="t" style="left:1374.67px;top:165.37px;font-size:24.27px;line-height:24.27px;color:#f4f4f4;transform:scaleX(1.0156);">Generale</div>
<div class="t" style="left:1446.73px;top:225.40px;font-size:36.00px;line-height:36.00px;color:#d6d6d6;transform:scaleX(1.0061);">%</div>
<div class="t" style="left:1597.10px;top:224.50px;font-size:18.00px;line-height:18.00px;color:#d6d6d6;transform:scaleX(0.9850);">,0</div>
<div class="t" style="left:1587.20px;top:240.40px;font-size:18.00px;line-height:18.00px;color:#d6d6d6;transform:scaleX(0.9877);">,00</div>
<div class="t" style="left:1638.69px;top:224.50px;font-size:18.00px;line-height:18.00px;color:#d6d6d6;transform:scaleX(0.9921);">,00</div>
<div class="t" style="left:1648.59px;top:240.40px;font-size:18.00px;line-height:18.00px;color:#d6d6d6;transform:scaleX(0.9929);">,0</div>
<div class="t" style="left:1717.16px;top:224.22px;font-size:22.09px;line-height:22.09px;color:#f2f2f2;transform:scaleX(1.0404);">Formattazione</div>
<div class="t" style="left:1727.47px;top:248.22px;font-size:22.09px;line-height:22.09px;color:#f2f2f2;transform:scaleX(1.0385);">condizionale</div>
<div class="t" style="left:1893.67px;top:224.22px;font-size:22.09px;line-height:22.09px;color:#f2f2f2;transform:scaleX(1.0334);">Formatta</div>
<div class="t" style="left:1875.99px;top:248.22px;font-size:22.09px;line-height:22.09px;color:#f2f2f2;transform:scaleX(1.0203);">come tabella</div>
<div class="t" style="left:2040.92px;top:224.22px;font-size:22.09px;line-height:22.09px;color:#f2f2f2;transform:scaleX(1.0863);">Stili</div>
<div class="t" style="left:2035.97px;top:248.22px;font-size:22.10px;line-height:22.10px;color:#f2f2f2;transform:scaleX(1.0355);">cella</div>
<div class="t" style="left:2155.40px;top:224.22px;font-size:22.09px;line-height:22.09px;color:#f2f2f2;transform:scaleX(1.0561);">Inserisci</div>
<div class="t" style="left:2261.64px;top:224.22px;font-size:22.09px;line-height:22.09px;color:#f2f2f2;transform:scaleX(0.9930);">Elimina</div>
<div class="t" style="left:2355.16px;top:224.22px;font-size:22.09px;line-height:22.09px;color:#f2f2f2;transform:scaleX(1.0436);">Formato</div>
<div class="t" style="left:2574.50px;top:223.72px;font-size:22.09px;line-height:22.09px;color:#f2f2f2;transform:scaleX(1.0033);">Ordina</div>
<div class="t" style="left:2575.43px;top:247.13px;font-size:22.67px;line-height:22.67px;color:#f2f2f2;transform:scaleX(1.0469);">e filtra</div>
<div class="t" style="left:2675.56px;top:223.72px;font-size:22.09px;line-height:22.09px;color:#f2f2f2;transform:scaleX(0.9921);">Trova e</div>
<div class="t" style="left:2665.14px;top:247.13px;font-size:22.67px;line-height:22.67px;color:#f2f2f2;transform:scaleX(0.9756);">seleziona</div>
<div class="t" style="left:157.17px;top:1714.50px;font-size:24.71px;line-height:24.71px;color:#207a4c;font-weight:bold;transform:scaleX(0.9496);">Foglio1</div>
<div class="t" style="left:47.55px;top:1765.00px;font-size:24.71px;line-height:24.71px;color:#e5e5e5;transform:scaleX(1.0372);">Pronto</div>
<div class="t" style="left:2766.09px;top:1765.00px;font-size:24.71px;line-height:24.71px;color:#ebebeb;transform:scaleX(1.0291);">100%</div>
</body></html>
